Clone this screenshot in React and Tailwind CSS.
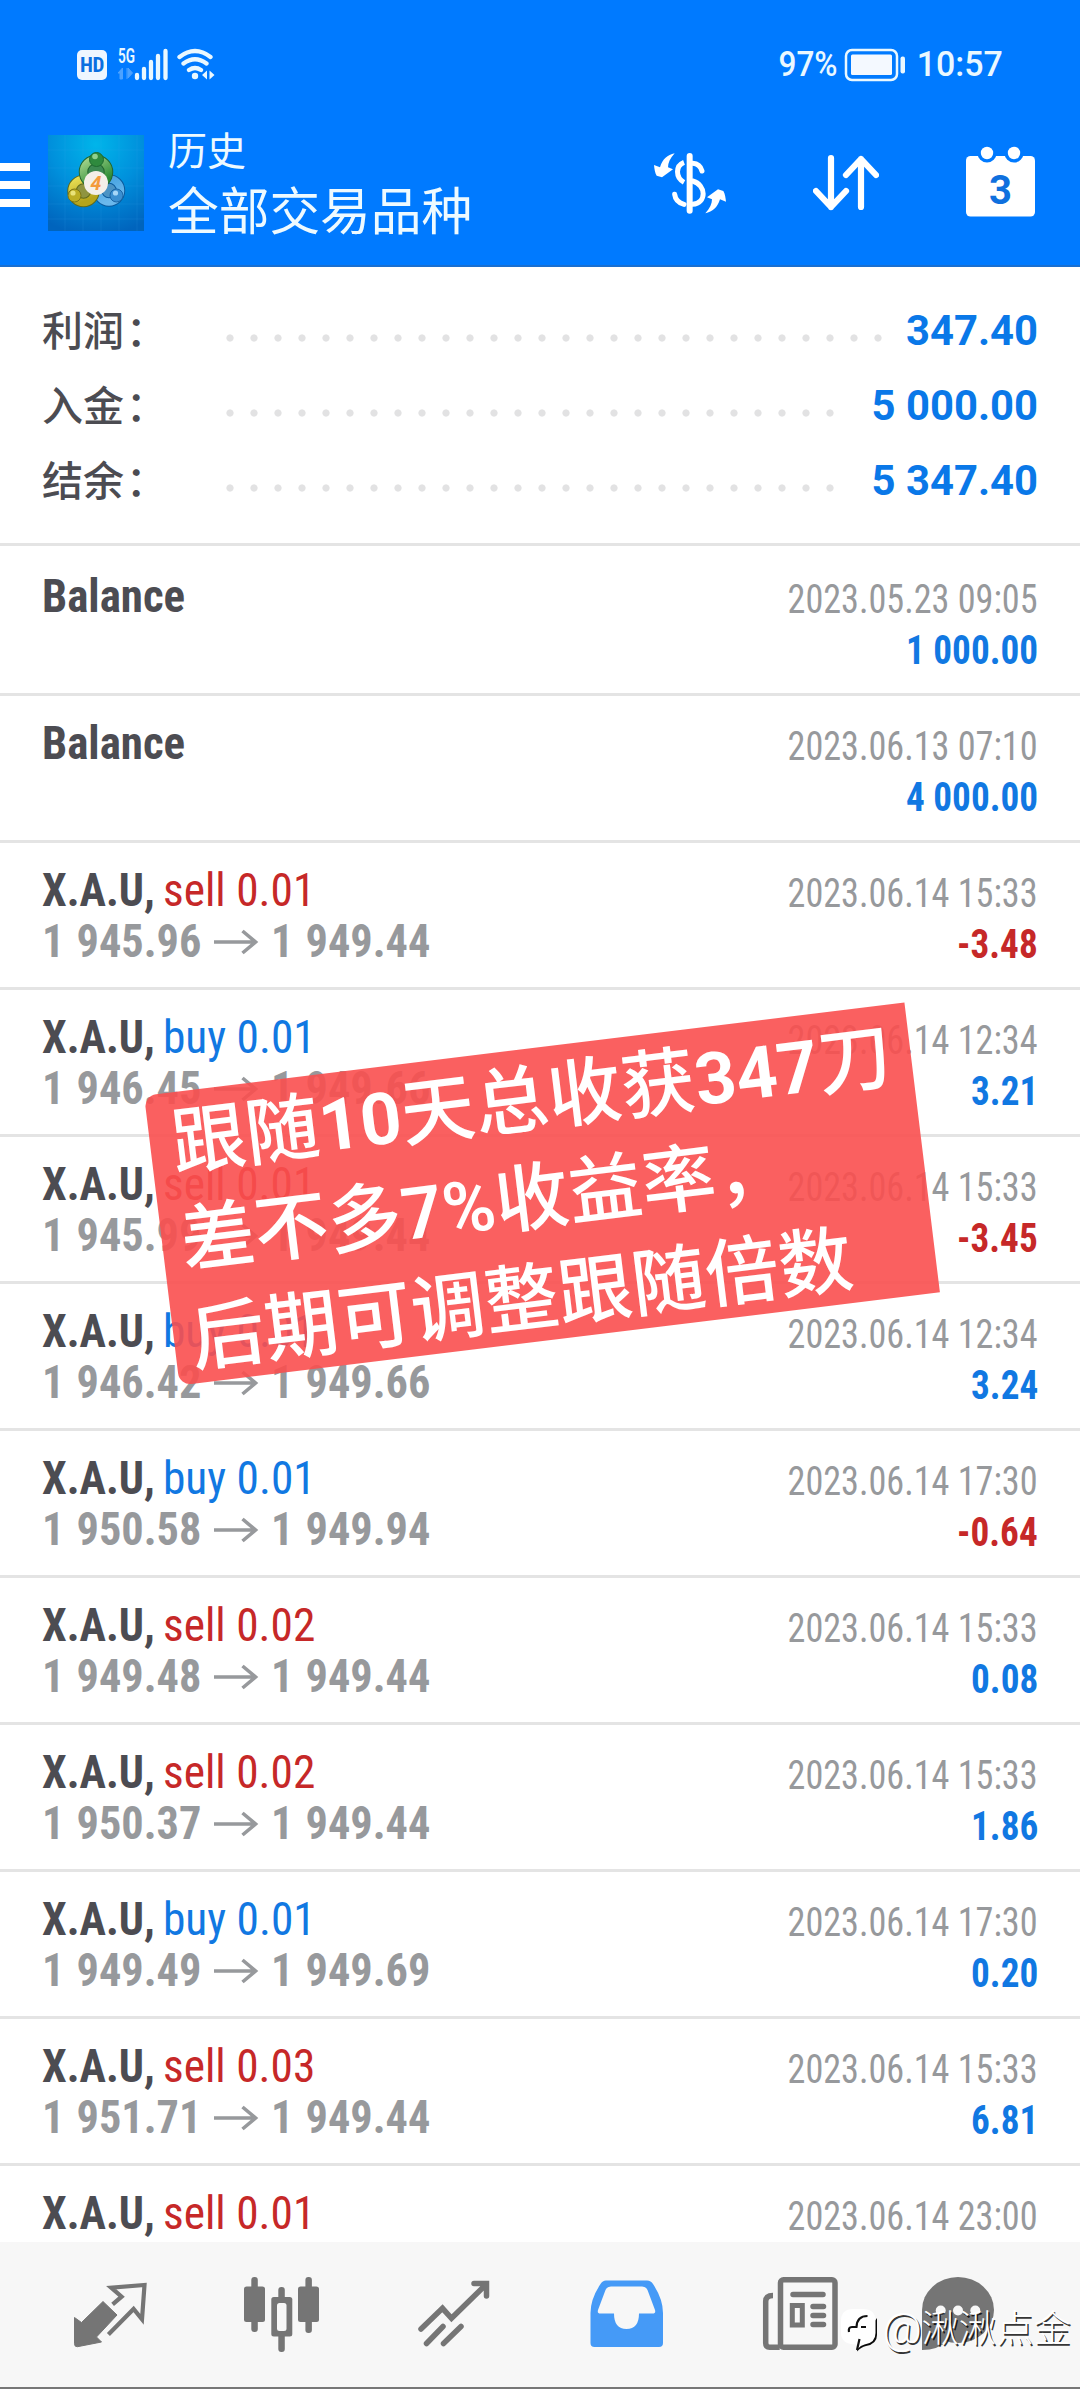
const cjk = "[font-family:Roboto,'Noto_Sans_CJK_SC',sans-serif]";

const summary = [
  { label: "利润", value: "347.40", dots: "w-[672px]" },
  { label: "入金", value: "5 000.00", dots: "w-[624px]" },
  { label: "结余", value: "5 347.40", dots: "w-[624px]" },
];

const rows = [
  { title: "Balance", date: "2023.05.23 09:05", value: "1 000.00" },
  { title: "Balance", date: "2023.06.13 07:10", value: "4 000.00" },
  { side: "sell", lot: "0.01", from: "1 945.96", to: "1 949.44", date: "2023.06.14 15:33", value: "-3.48" },
  { side: "buy", lot: "0.01", from: "1 946.45", to: "1 949.66", date: "2023.06.14 12:34", value: "3.21" },
  { side: "sell", lot: "0.01", from: "1 945.99", to: "1 949.44", date: "2023.06.14 15:33", value: "-3.45" },
  { side: "buy", lot: "0.01", from: "1 946.42", to: "1 949.66", date: "2023.06.14 12:34", value: "3.24" },
  { side: "buy", lot: "0.01", from: "1 950.58", to: "1 949.94", date: "2023.06.14 17:30", value: "-0.64" },
  { side: "sell", lot: "0.02", from: "1 949.48", to: "1 949.44", date: "2023.06.14 15:33", value: "0.08" },
  { side: "sell", lot: "0.02", from: "1 950.37", to: "1 949.44", date: "2023.06.14 15:33", value: "1.86" },
  { side: "buy", lot: "0.01", from: "1 949.49", to: "1 949.69", date: "2023.06.14 17:30", value: "0.20" },
  { side: "sell", lot: "0.03", from: "1 951.71", to: "1 949.44", date: "2023.06.14 15:33", value: "6.81" },
  { side: "sell", lot: "0.01", date: "2023.06.14 23:00" },
];

function StatusBar() {
  return (
    <div className="flex h-[96px] items-start px-[77px] pt-[47px] text-[#eaf8ff]">
      <div className="mt-[3px] flex h-[30px] w-[30px] items-center justify-center rounded-[5px] bg-[#eef6ff]">
        <span className="text-[21px] leading-[28px] font-bold tracking-[-0.5px] text-[#0a6fe0] [font-stretch:85%]">HD</span>
      </div>
      <svg className="ml-[11px]" width="51" height="36" viewBox="118 47 51 36">
        <text x="118" y="63" fontSize="19.5" fontWeight="600" fill="#eaf8ff" textLength="17" lengthAdjust="spacingAndGlyphs" fontFamily="Roboto">5G</text>
        <path d="M118 73l4.500-5v11h-2.500v-6zM127 68v11M128 68l4.500 5-4.500 5z" fill="#4da2ff" stroke="#4da2ff" strokeWidth="1" />
        <path d="M137 75v3M144 69v9M151 62v16M158 56v22M165.500 51v27" stroke="#eaf8ff" strokeWidth="4.300" strokeLinecap="round" />
      </svg>
      <svg className="ml-2" width="40" height="36" viewBox="177 47 40 36" fill="none" stroke="#eaf8ff" strokeWidth="4.300" strokeLinecap="round">
        <path d="M179.500 57q15.500-12 31 0M183.500 63.500q11.500-8.500 23 0M189 70q6-4 12 0" />
        <circle cx="195" cy="76" r="3.200" fill="#eaf8ff" stroke="none" />
        <path d="M202 75l5-4.500v9zM209.500 70.500l5 4.500-5 4.500z" fill="#eaf8ff" stroke="none" />
      </svg>
      <div className="ml-auto flex items-start font-medium">
        <span className="origin-right scale-x-[0.9] text-[35px] leading-[36px]">97%</span>
        <svg className="mt-px ml-[7px]" width="62" height="34" viewBox="848 48 62 34">
          <rect x="850" y="50" width="51" height="30" rx="6" fill="none" stroke="#eaf8ff" strokeWidth="2.500" />
          <rect x="855" y="54.500" width="41" height="20.500" rx="1.500" fill="#f4f9ff" />
          <rect x="904.500" y="56.500" width="4.500" height="17" rx="2" fill="#eaf8ff" />
        </svg>
        <span className="ml-[8px] origin-right scale-x-[0.97] text-[35px] leading-[36px]">10:57</span>
      </div>
    </div>
  );
}

function AppLogo() {
  return (
    <svg width="96" height="96" viewBox="0 0 96 96">
      <defs>
        <radialGradient id="sky" cx="0.5" cy="0.1" r="0.95">
          <stop offset="0" stopColor="#00b5ea" />
          <stop offset="0.5" stopColor="#0090dc" />
          <stop offset="1" stopColor="#0064bd" />
        </radialGradient>
        <linearGradient id="green" x1="0" y1="0" x2="0.6" y2="1">
          <stop offset="0" stopColor="#a5d58c" />
          <stop offset="1" stopColor="#2a8a35" />
        </linearGradient>
        <linearGradient id="yellow" x1="0" y1="0" x2="0.4" y2="1">
          <stop offset="0" stopColor="#e8df55" />
          <stop offset="1" stopColor="#b5a41c" />
        </linearGradient>
        <linearGradient id="blue" x1="0" y1="0" x2="0.4" y2="1">
          <stop offset="0" stopColor="#3f9fdf" />
          <stop offset="1" stopColor="#6bb8ec" />
        </linearGradient>
      </defs>
      <rect width="96" height="96" fill="url(#sky)" />
      <path d="M17 0v96M35 0v96M53 0v96M71 0v96M89 0v96M0 15h96M0 33h96M0 51h96M0 69h96M0 84h96" stroke="#38b4ee" strokeOpacity=".18" strokeWidth=".8" />
      <circle cx="61" cy="55.500" r="11.500" fill="#4b93c4" stroke="#0b5a9c" strokeWidth="9.500" />
      <circle cx="61" cy="55.500" r="11.500" fill="none" stroke="url(#blue)" strokeWidth="7.500" />
      <circle cx="35.500" cy="56" r="11.500" fill="#8f9440" stroke="#5f6a1c" strokeWidth="9.500" />
      <circle cx="35.500" cy="56" r="11.500" fill="none" stroke="url(#yellow)" strokeWidth="7.500" />
      <circle cx="48" cy="37" r="12.500" fill="#3d8a52" stroke="#23652f" strokeWidth="9.500" />
      <circle cx="48" cy="37" r="12.500" fill="none" stroke="url(#green)" strokeWidth="7.500" />
      <circle cx="48.500" cy="24.500" r="7" fill="#2f8a3e" stroke="#1d6a30" />
      <circle cx="47" cy="21.500" r="2.800" fill="#8fd08e" />
      <circle cx="26.500" cy="60.500" r="6.500" fill="#bcae24" stroke="#7d7615" />
      <circle cx="25" cy="58" r="2.600" fill="#e9e37a" />
      <circle cx="68.500" cy="60.500" r="6.500" fill="#3b8fd0" stroke="#1a65a6" />
      <circle cx="67.500" cy="58" r="2.600" fill="#a6d6f7" />
      <circle cx="48" cy="48" r="12" fill="#f3efe9" />
      <text x="48" y="55" textAnchor="middle" fontSize="19" fontWeight="700" fontStyle="italic" fill="#f39a3c" fontFamily="Open Sans">4</text>
    </svg>
  );
}

function Header() {
  return (
    <div className="flex h-[169px] items-start">
      <div className="mt-[67px] flex w-[30px] flex-col gap-[10px]">
        <div className="h-2 bg-white" />
        <div className="h-2 bg-white" />
        <div className="h-2 bg-white" />
      </div>
      <div className="mt-[39px] ml-[18px]">
        <AppLogo />
      </div>
      <div className="mt-[32px] ml-[24px] flex flex-col text-[#eefaff]">
        <span className="text-[39px] leading-[48px]">历史</span>
        <span className="mt-[6px] text-[50.7px] leading-[62px]">全部交易品种</span>
      </div>
      <svg className="mt-[57px] ml-auto" width="72" height="61" viewBox="42 54 216 183" fill="none" stroke="white" strokeWidth="15" strokeLinecap="round">
        <path d="M149 63v164" strokeWidth="18" />
        <path d="M132 82C106 92 106 128 132 142" strokeLinecap="butt" />
        <path d="M158 85C174 86 182 93 186 108M158 138C200 150 200 205 158 208" />
        <path d="M104 178C106 195 118 204 132 208" />
        <path d="M42 90L60 97C68 72 82 60 104 55C90 70 84 84 84 97L99 103L66 127L50 122C45 115 43 100 42 90Z" fill="white" stroke="none" />
        <path d="M258 200L240 193C232 218 218 230 196 235C210 220 216 206 216 193L201 187L234 163L250 168C255 175 257 190 258 200Z" fill="white" stroke="none" />
      </svg>
      <svg className="mt-[58px] ml-[87px]" width="66" height="58" viewBox="813 154 66 58" fill="none" stroke="white" strokeWidth="6.200" strokeLinecap="round" strokeLinejoin="round">
        <path d="M831 158v49M816 191l15 16 15-16M861 207v-48M846 175l15-16 15 16" />
      </svg>
      <svg className="mt-[50px] mr-[45px] ml-[87px]" width="69" height="71" viewBox="966 146 69 71">
        <rect x="966" y="156" width="69" height="60.500" rx="4.500" fill="white" />
        <circle cx="987" cy="153" r="9.500" fill="#007aff" />
        <circle cx="1014" cy="153" r="9.500" fill="#007aff" />
        <circle cx="987" cy="153" r="6.200" fill="white" />
        <circle cx="1014" cy="153" r="6.200" fill="white" />
        <text x="1000.500" y="203.500" textAnchor="middle" fontSize="40" fontWeight="700" fill="#0f70de" fontFamily="Roboto">3</text>
      </svg>
    </div>
  );
}

function Summary() {
  return (
    <div className="flex h-[276px] flex-col pt-[26px] pr-[42px] pl-[42px]">
      {summary.map((s) => (
        <div key={s.label} className="flex h-[75px] items-center">
          <span className="mt-[3px] w-[176px] text-[41px] leading-[75px] font-medium text-[#4c4c52]">
            {s.label}
            <span className="ml-[2px]">：</span>
          </span>
          <div className={`mt-[15px] h-[8px] ${s.dots} bg-[radial-gradient(circle_at_12px_4px,#e2e2e3_3.2px,transparent_4px)] bg-[length:24px_8px]`} />
          <span className="mt-[1px] ml-auto text-[41.8px] font-bold text-[#0a78e8]">{s.value}</span>
        </div>
      ))}
    </div>
  );
}

function Arrow() {
  return (
    <svg className="mt-[14px] ml-[12px]" width="45" height="26" viewBox="0 0 45 26" fill="none" stroke="#97999c" strokeWidth="3.600">
      <path d="M0 13h42M28.500 2l13 11-13 11" />
    </svg>
  );
}

function Row({ row, first }) {
  const down = row.value && row.value.startsWith("-");
  return (
    <div className={`flex w-full shrink-0 justify-between border-t-[3px] border-[#e4e4e4] pr-[42px] pl-[42px] [font-kerning:none] [font-stretch:75%] ${first ? "h-[150px] pt-[24px]" : "h-[147px] pt-[21px]"}`}>
      <div className="text-[47px] leading-[51px]">
        {row.title ? (
          <div className="origin-left scale-x-[0.955] font-bold text-[#4c4c52]">{row.title}</div>
        ) : (
          <div className="flex whitespace-pre">
            <span className="w-[121px]">
              <span className="inline-block origin-left scale-x-[0.94] font-bold text-[#4c4c52]">X.A.U, </span>
            </span>
            <span className={`inline-block origin-left scale-x-[0.965] font-[450] ${row.side === "sell" ? "text-[#c62828]" : "text-[#1178e2]"}`}>
              {row.side} {row.lot}
            </span>
          </div>
        )}
        {row.from && (
          <div className="flex font-bold text-[#97999c] [word-spacing:2px]">
            <span className="w-[160px]">
              <span className="inline-block origin-left scale-x-[0.943] whitespace-nowrap">{row.from}</span>
            </span>
            <Arrow />
            <span className="ml-[12px] w-[162px]">
              <span className="inline-block origin-left scale-x-[0.943] whitespace-nowrap">{row.to}</span>
            </span>
          </div>
        )}
      </div>
      <div className="flex flex-col items-end pt-[4px] text-[40px] leading-[51px]">
        <div className="origin-right scale-x-[0.904] font-[450] text-[#97999c]">{row.date}</div>
        <div className={`origin-right scale-x-[0.93] font-bold ${down ? "text-[#c62828]" : "text-[#1178e2]"}`}>{row.value}</div>
      </div>
    </div>
  );
}

function NavBar() {
  return (
    <nav className="flex h-[147px] shrink-0 items-start border-b-2 border-[#777777] bg-[#f7f7f7] pt-[30px] pl-[70px]">
      <svg width="80" height="80" viewBox="70 2272 80 80">
        <path d="M74.500 2317.500l7 5 21.500-21 14 13.500-20.500 22 5 5-24 4.700q-3 .3-3-3z" fill="#757575" stroke="#757575" strokeWidth="1" strokeLinejoin="round" />
        <path d="M112.600 2304.300l9-7.600-10.400-9 33.300-2.700-2.500 34.300-8.400-10.300-25.200 25.500" fill="none" stroke="#757575" strokeWidth="4.200" />
      </svg>
      <svg className="ml-[92px]" width="80" height="84" viewBox="242 2272 80 84" fill="#757575">
        <rect x="244" y="2286.500" width="21" height="35.500" rx="2.500" />
        <rect x="251.300" y="2277" width="6.500" height="55" rx="3" />
        <rect x="278.300" y="2287" width="6.500" height="65" rx="3" />
        <rect x="271.300" y="2297" width="21" height="39.500" rx="2.500" />
        <rect x="277" y="2303" width="9.500" height="28" rx="2.500" fill="#f7f7f7" />
        <rect x="298" y="2286.500" width="21" height="35.500" rx="2.500" />
        <rect x="305.400" y="2277" width="6.500" height="56" rx="3" />
      </svg>
      <svg className="ml-[92px]" width="80" height="80" viewBox="414 2272 80 80" fill="none" stroke="#757575" strokeWidth="5.500" strokeLinecap="round">
        <path d="M421 2329l21.500-20.700 9 10L486 2284.500M474 2283.500h12.500v12.500M426.500 2343.500l16.500-17M443.500 2343.500l17.500-17" />
      </svg>
      <svg className="ml-[93px]" width="80" height="80" viewBox="587 2272 80 80">
        <path fillRule="evenodd" d="M606 2280.500h41q4 0 6 3.500Q663 2299 663 2313v30q0 4-4 4h-64.500q-4 0-4-4v-30q0-14 10-29 2-3.500 5.500-3.500zM611 2286.500q-4 0-5.500 3.500l-7.500 20q-1 3.500 2.500 3.500H614q0 15.500 12.500 15.500T639 2313.500h13.500q3.500 0 2.500-3.500l-7.500-20q-1.500-3.500-5.500-3.500z" fill="#459af7" />
      </svg>
      <svg className="ml-[93px]" width="80" height="80" viewBox="760 2272 80 80" fill="none" stroke="#757575" strokeWidth="5.500" strokeLinecap="round">
        <rect x="780.500" y="2279.800" width="54.500" height="67.500" rx="3" />
        <path d="M773 2295.500q-7.300 0-7.300 6v41.500q0 4.300 4 4.300h10" strokeLinecap="butt" />
        <path d="M793 2294.600h30M813 2306.600h10.500M813 2315.600h10.500M813 2324.600h10.500" />
        <rect x="792.300" y="2305.500" width="10" height="19.500" strokeWidth="5" />
      </svg>
      <svg className="ml-[78px]" width="80" height="80" viewBox="918 2272 80 80">
        <ellipse cx="958" cy="2310" rx="36" ry="33" fill="#757575" />
        <path d="M922 2310v40q16 0 25-9z" fill="#757575" />
        <circle cx="940.700" cy="2310.500" r="5" fill="#f7f7f7" />
        <circle cx="958" cy="2310.500" r="5" fill="#f7f7f7" />
        <circle cx="975.300" cy="2310.500" r="5" fill="#f7f7f7" />
      </svg>
    </nav>
  );
}

function Watermark() {
  return (
    <div className="absolute right-[9px] bottom-[31px] flex h-[57px] items-center">
      <svg className="mt-[3px] mr-[4px]" width="38" height="44" viewBox="0 0 38 44">
        <path d="M37 9v17q0 9-11 11-5 1-9 5.500l1-7z" fill="#0a0a0a" />
        <path d="M13 0h10q12.500 0 12.500 12v12q0 10-11 11.500-4 1-6.500 4l-1-4Q1 35.500 1 24V12Q1 0 13 0z" fill="white" />
        <path d="M16.500 18q.5-11 11-11M9 23q-1-5 3-5h5.500M21 18h5M19.500 30l-2.500 11" fill="none" stroke="#111" strokeWidth="2.200" />
      </svg>
      <div className="flex items-center font-light text-white [text-shadow:1.5px_1.5px_0.5px_rgba(0,0,0,0.8)]">
        <span className="mb-[3px] w-[39px] text-[43px] leading-[57px]">@</span>
        <span className="text-[37.4px] leading-[57px]">湫湫点金</span>
      </div>
    </div>
  );
}

export default function App() {
  return (
    <div className={`relative flex h-[2389px] w-[1080px] flex-col overflow-hidden bg-white ${cjk}`}>
      <header className="h-[267px] shrink-0 border-b-2 border-[#1a6fd0] bg-[#007aff]">
        <StatusBar />
        <Header />
      </header>
      <Summary />
      <main className="flex min-h-0 flex-1 flex-col overflow-hidden">
        {rows.map((row, i) => (
          <Row key={i} row={row} first={i === 0} />
        ))}
      </main>
      <NavBar />
      <div className="absolute top-[1048px] left-[159px] h-[292px] w-[766px] rotate-[-6.98deg] rounded-l-[12px] bg-[rgba(250,79,79,0.9)] pt-[3px] text-[74px] leading-[97.3px] font-medium whitespace-nowrap text-white">
        <div className="pl-[22px]">跟随<b className="text-[72px]">10</b>天总收获<b className="text-[72px]">347</b>刀</div>
        <div className="pl-[19px]">差不多<b className="text-[72px] font-semibold">7%</b>收益率，</div>
        <div className="pl-[17px]">后期可调整跟随倍数</div>
      </div>
      <Watermark />
    </div>
  );
}
